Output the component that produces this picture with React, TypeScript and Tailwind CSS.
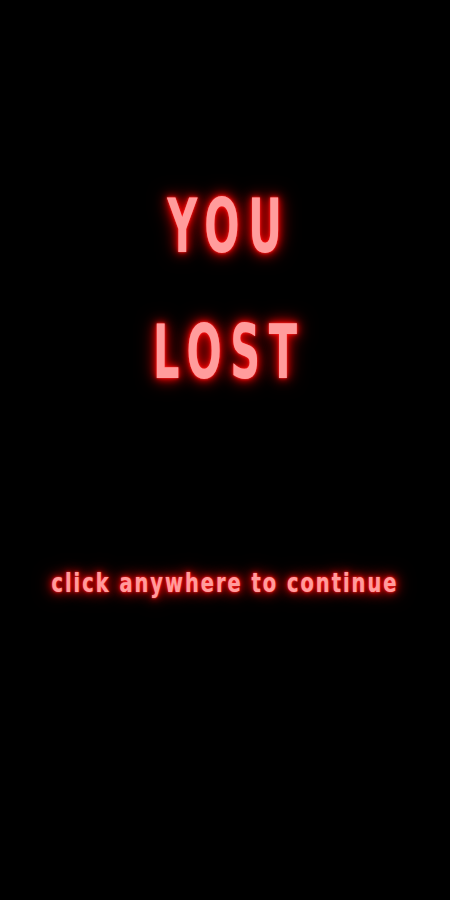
export default function App() {
  const glow = {
    textShadow:
      '0 0 1px #ff3b3b, 0 0 3px #ff2020, 0 0 8px #ff0000, 0 0 14px #d00000, 0 0 22px #900000',
  };

  return (
    <div className="flex h-[900px] w-full flex-col items-center bg-black font-['DejaVu_Sans_Condensed',sans-serif] text-[#ff9c9c]">
      <h1 className="mt-[163px] flex flex-col items-center text-[64px] font-bold leading-[126px] tracking-[12px]" style={glow}>
        <span className="inline-block scale-x-[0.72] scale-y-[1.16] pl-[12px]">YOU</span>
        <span className="inline-block scale-x-[0.72] scale-y-[1.16] pl-[12px]">LOST</span>
      </h1>
      <p className="mt-[148px] text-[27px] font-bold tracking-[2.5px]" style={glow}>
        <span className="inline-block scale-x-[0.8]">click anywhere to continue</span>
      </p>
    </div>
  );
}
